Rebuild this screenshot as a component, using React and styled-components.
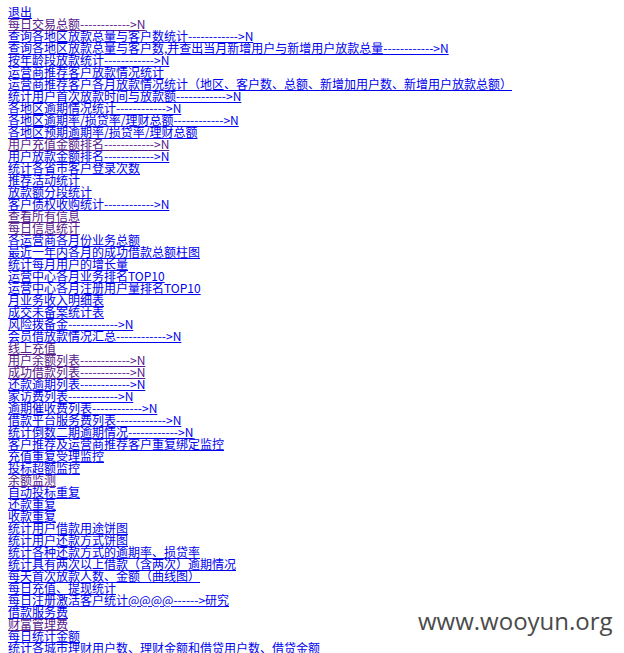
import React from 'react';
import styled, { createGlobalStyle } from 'styled-components';

const GlobalStyle = createGlobalStyle`
  body {
    margin: 6px 8px 8px;
    background: #fff;
    font-family: "Noto Sans CJK SC", "Noto Sans", sans-serif;
    font-size: 12px;
  }
`;

const DASH = '-'.repeat(12);

const links = [
  { text: '退出' },
  { text: `每日交易总额${DASH}>N`, visited: true },
  { text: `查询各地区放款总量与客户数统计${DASH}>N` },
  { text: `查询各地区放款总量与客户数,并查出当月新增用户与新增用户放款总量${DASH}>N` },
  { text: `按年龄段放款统计${DASH}>N` },
  { text: '运营商推荐客户放款情况统计' },
  { text: '运营商推荐客户各月放款情况统计（地区、客户数、总额、新增加用户数、新增用户放款总额）' },
  { text: `统计用户首次放款时间与放款额${DASH}>N` },
  { text: `各地区逾期情况统计${DASH}>N` },
  { text: `各地区逾期率/损贷率/理财总额${DASH}>N` },
  { text: '各地区预期逾期率/损贷率/理财总额' },
  { text: `用户充值金额排名${DASH}>N`, visited: true },
  { text: `用户放款金额排名${DASH}>N` },
  { text: '统计各省市客户登录次数' },
  { text: '推荐活动统计' },
  { text: '放款额分段统计' },
  { text: `客户债权收购统计${DASH}>N` },
  { text: '查看所有信息', visited: true },
  { text: '每日信息统计', visited: true },
  { text: '各运营商各月份业务总额' },
  { text: '最近一年内各月的成功借款总额柱图' },
  { text: '统计每月用户的增长量' },
  { text: '运营中心各月业务排名TOP10' },
  { text: '运营中心各月注册用户量排名TOP10' },
  { text: '月业务收入明细表' },
  { text: '成交未备案统计表' },
  { text: `风险拨备金${DASH}>N` },
  { text: `会员借放款情况汇总${DASH}>N` },
  { text: '线上充值', visited: true },
  { text: `用户余额列表${DASH}>N`, visited: true },
  { text: `成功借款列表${DASH}>N`, visited: true },
  { text: `还款逾期列表${DASH}>N` },
  { text: `家访费列表${DASH}>N` },
  { text: `逾期催收费列表${DASH}>N` },
  { text: `借款平台服务费列表${DASH}>N` },
  { text: `统计倒数二期逾期情况${DASH}>N` },
  { text: '客户推荐及运营商推荐客户重复绑定监控' },
  { text: '充值重复受理监控' },
  { text: '投标超额监控' },
  { text: '余额监测', visited: true },
  { text: '自动投标重复' },
  { text: '还款重复' },
  { text: '收款重复' },
  { text: '统计用户借款用途饼图' },
  { text: '统计用户还款方式饼图' },
  { text: '统计各种还款方式的逾期率、损贷率' },
  { text: '统计具有两次以上借款（含两次）逾期情况' },
  { text: '每天首次放款人数、金额（曲线图）' },
  { text: '每日充值、提现统计' },
  { text: '每日注册激活客户统计@@@@------>研究' },
  { text: '借款服务费' },
  { text: '财富管理费', visited: true },
  { text: '每日统计金额' },
  { text: '统计各城市理财用户数、理财金额和借贷用户数、借贷金额' },
];

const App = () => {
  return (
    <>
      <GlobalStyle />
      <List>
        {links.map((l, i) => (
          <MenuLink key={i} href="#" $visited={l.visited}>
            {l.text}
          </MenuLink>
        ))}
      </List>
      <Watermark>www.wooyun.org</Watermark>
    </>
  );
};

const List = styled.div`
  display: flex;
  flex-direction: column;
  align-items: flex-start;
`;

const MenuLink = styled.a`
  display: block;
  line-height: 12px;
  height: 12px;
  white-space: nowrap;
  color: ${(p) => (p.$visited ? '#551a8b' : '#0000ee')};
  text-decoration: underline;
`;

const Watermark = styled.div`
  position: absolute;
  left: 418px;
  top: 604px;
  font-family: "Open Sans", "Noto Sans", sans-serif;
  font-size: 24px;
  color: #4a4a4a;
  pointer-events: none;
`;

export default App;
